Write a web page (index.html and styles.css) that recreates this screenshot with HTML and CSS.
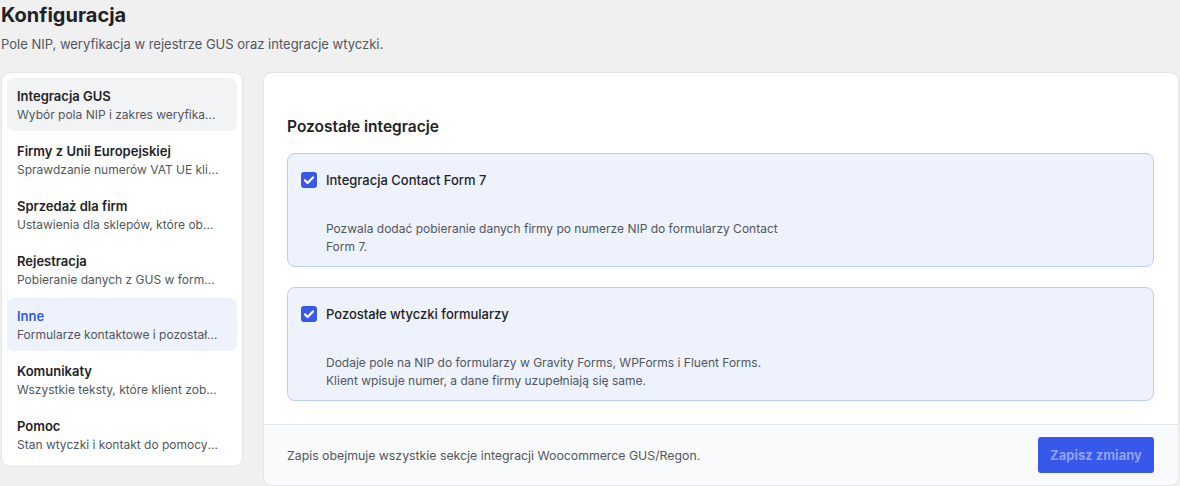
FILE: index.html
```html
<!DOCTYPE html>
<html lang="pl">
<head>
<meta charset="utf-8">
<title>Konfiguracja</title>
<link rel="stylesheet" href="styles.css">
</head>
<body>
<div class="wrap">
  <header class="page-head">
    <h1 class="page-title">Konfiguracja</h1>
    <p class="page-sub">Pole NIP, weryfikacja w rejestrze GUS oraz integracje wtyczki.</p>
  </header>

  <div class="layout">
    <nav class="side">
      <a class="side-item is-hover">
        <span class="side-title">Integracja GUS</span>
        <span class="side-desc">Wybór pola NIP i zakres weryfikacji danych</span>
      </a>
      <a class="side-item">
        <span class="side-title">Firmy z Unii Europejskiej</span>
        <span class="side-desc">Sprawdzanie numerów VAT UE klientów</span>
      </a>
      <a class="side-item">
        <span class="side-title">Sprzedaż dla firm</span>
        <span class="side-desc">Ustawienia dla sklepów, które obsługują firmy</span>
      </a>
      <a class="side-item">
        <span class="side-title">Rejestracja</span>
        <span class="side-desc">Pobieranie danych z GUS w formularzu rejestracji</span>
      </a>
      <a class="side-item is-active">
        <span class="side-title">Inne</span>
        <span class="side-desc">Formularze kontaktowe i pozostałe wtyczki</span>
      </a>
      <a class="side-item">
        <span class="side-title">Komunikaty</span>
        <span class="side-desc">Wszystkie teksty, które klient zobaczy</span>
      </a>
      <a class="side-item">
        <span class="side-title">Pomoc</span>
        <span class="side-desc">Stan wtyczki i kontakt do pomocy technicznej</span>
      </a>
    </nav>

    <section class="panel">
      <div class="panel-body">
        <h2 class="panel-title">Pozostałe integracje</h2>

        <div class="opt">
          <label class="opt-row">
            <span class="check"><svg viewBox="0 0 16 16" width="16" height="16"><path d="M4 8.4l2.6 2.6L12 5.4" fill="none" stroke="#fff" stroke-width="2.2" stroke-linecap="round" stroke-linejoin="round"/></svg></span>
            <span class="opt-label">Integracja Contact Form 7</span>
          </label>
          <p class="opt-desc">Pozwala dodać pobieranie danych firmy po numerze NIP do formularzy Contact Form 7.</p>
        </div>

        <div class="opt">
          <label class="opt-row">
            <span class="check"><svg viewBox="0 0 16 16" width="16" height="16"><path d="M4 8.4l2.6 2.6L12 5.4" fill="none" stroke="#fff" stroke-width="2.2" stroke-linecap="round" stroke-linejoin="round"/></svg></span>
            <span class="opt-label">Pozostałe wtyczki formularzy</span>
          </label>
          <p class="opt-desc">Dodaje pole na NIP do formularzy w Gravity Forms, WPForms i Fluent Forms. Klient wpisuje numer, a dane firmy uzupełniają się same.</p>
        </div>
      </div>

      <footer class="panel-foot">
        <span class="foot-note">Zapis obejmuje wszystkie sekcje integracji Woocommerce GUS/Regon.</span>
        <button class="btn-save" type="button" disabled>Zapisz zmiany</button>
      </footer>
    </section>
  </div>
</div>
</body>
</html>
```

FILE: styles.css
```css
* { box-sizing: border-box; }

html, body {
  margin: 0;
  background: #f0f0f1;
  font-family: Inter, "Noto Sans", "Liberation Sans", sans-serif;
  color: #1d2327;
}

.wrap {
  padding: 0 1px;
}

.page-title {
  margin: 0;
  font-size: 20px;
  line-height: 30px;
  font-weight: 700;
  color: #1d2327;
}

.page-sub {
  margin: 5px 0 0;
  font-size: 13px;
  line-height: 18px;
  color: #50575e;
}

.layout {
  margin-top: 19px;
  display: flex;
  align-items: flex-start;
  gap: 20px;
}

/* side navigation */
.side {
  width: 242px;
  flex: none;
  background: #fff;
  border: 1px solid #e2e4e7;
  border-radius: 9px;
  padding: 5px;
  display: flex;
  flex-direction: column;
  gap: 2px;
}

.side-item {
  display: flex;
  flex-direction: column;
  height: 53px;
  padding: 9px 10px 0;
  border-radius: 7px;
  text-decoration: none;
  min-width: 0;
}

.side-item.is-hover { background: #f2f3f5; }
.side-item.is-active { background: #eef2fd; }

.side-title {
  font-size: 13px;
  line-height: 18px;
  font-weight: 600;
  color: #1d2327;
}

.is-active .side-title { color: #2f5be6; }

.side-desc {
  margin-top: 1px;
  font-size: 12px;
  line-height: 17px;
  color: #50575e;
  white-space: nowrap;
  overflow: hidden;
  text-overflow: ellipsis;
  padding-right: 8px;
}

/* main panel */
.panel {
  flex: 1;
  min-width: 0;
  background: #fff;
  border: 1px solid #e2e4e7;
  border-radius: 9px;
  overflow: hidden;
}

.panel-body {
  padding: 43px 24px 23px 23px;
  display: flex;
  flex-direction: column;
  gap: 20px;
}

.panel-title {
  margin: 0 0 -5px;
  font-size: 15.5px;
  line-height: 22px;
  font-weight: 600;
  color: #1d2327;
}

.opt {
  background: #eef2fd;
  border: 1px solid #b9cbf7;
  border-radius: 8px;
  padding: 15px 13px 10px;
}

.opt-row {
  display: flex;
  align-items: center;
  gap: 9px;
  height: 22px;
}

.check {
  width: 16px;
  height: 16px;
  border-radius: 3px;
  background: #3858e9;
  display: flex;
  flex: none;
}

.opt-label {
  font-size: 13px;
  font-weight: 500;
  color: #1d2327;
}

.opt-desc {
  margin: 29px 0 0 25px;
  max-width: 470px;
  font-size: 12px;
  line-height: 18px;
  color: #50575e;
}

.panel-foot {
  border-top: 1px solid #e2e4e7;
  background: #f9fafb;
  height: 61px;
  padding: 0 24px 0 23px;
  display: flex;
  align-items: center;
  justify-content: space-between;
}

.foot-note {
  font-size: 12.3px;
  color: #50575e;
}

.btn-save {
  width: 116px;
  height: 36px;
  border: 0;
  border-radius: 3px;
  background: #3858e9;
  color: #8ea2f5;
  font-family: inherit;
  font-size: 13px;
  font-weight: 700;
}
```
